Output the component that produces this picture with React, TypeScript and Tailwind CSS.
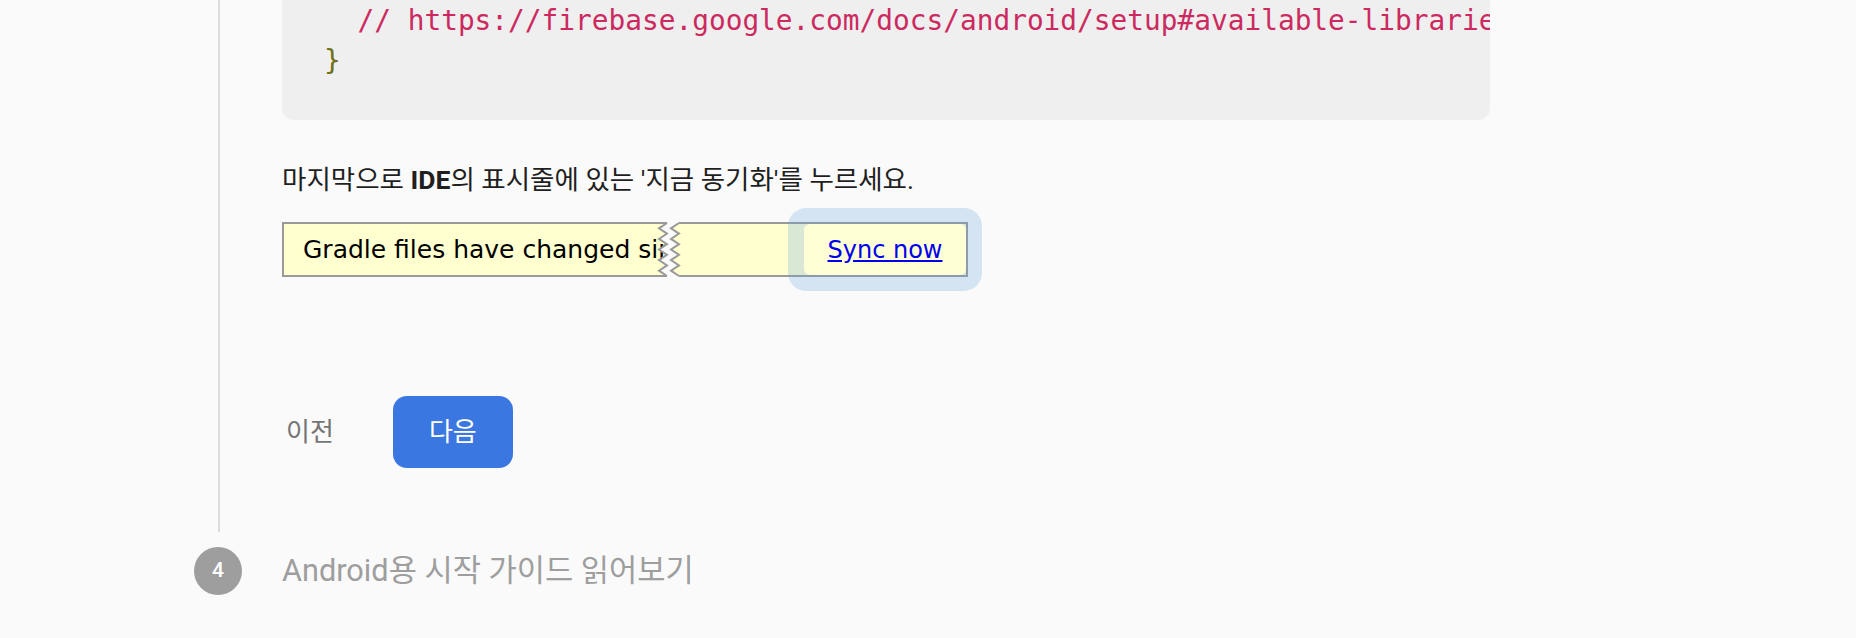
import React from "react";

const ys = [1, 6.3, 11.6, 16.9, 22.2, 27.5, 32.8, 38.1, 43.4, 48.7, 54];
const leftPts = ys.map((y, i) => [i % 2 === 0 ? 15 : 7, y] as [number, number]);
const rightPts = leftPts.map(([x, y]) => [x + 12, y] as [number, number]);
const toStr = (p: [number, number][]) => p.map(([x, y]) => `${x},${y}`).join(" ");
const gapPoly: [number, number][] = [
  [15, -1],
  ...leftPts,
  [15, 56],
  [27, 56],
  ...[...rightPts].reverse(),
  [27, -1],
];

function Zigzag() {
  return (
    <svg
      className="absolute left-[370px] top-0"
      width="34"
      height="55"
      viewBox="0 0 34 55"
      overflow="visible"
    >
      <polygon points={toStr(gapPoly)} fill="#fafafa" />
      <polyline points={toStr(leftPts)} fill="none" stroke="#9a9a9a" strokeWidth="2" />
      <polyline points={toStr(rightPts)} fill="none" stroke="#9a9a9a" strokeWidth="2" />
    </svg>
  );
}

export default function App() {
  return (
    <div className="w-[1856px] h-[638px] overflow-hidden bg-[#fafafa] font-['Roboto','Noto_Sans_CJK_KR',sans-serif]">
      <div className="pl-[194px]">
        <div className="flex">
          <div className="w-[48px] shrink-0 flex pl-[24px]">
            <div className="w-[2px] bg-[#dcdcdc]" />
          </div>
          <div className="ml-[40px] flex flex-col pb-[64px]">
            <div className="w-[1208px] overflow-hidden rounded-b-[12px] bg-[#efefef] pl-[42px] pt-[1px] pb-[39px] font-['DejaVu_Sans_Mono',monospace] text-[27.8px] leading-[40px] whitespace-pre">
              <div className="text-[#cc2a5f]">{"  // https://firebase.google.com/docs/android/setup#available-libraries"}</div>
              <div className="text-[#6f7118]">{"}"}</div>
            </div>

            <p className="mt-[42px] text-[26.5px] leading-[36px] text-[#1f1f1f]">
              마지막으로 <b className="font-bold">IDE</b>의 표시줄에 있는 '지금 동기화'를 누르세요.
            </p>

            <div className="relative mt-[24px] flex h-[55px] w-[686px]">
              <div className="w-[385px] h-full overflow-hidden whitespace-nowrap border-y-2 border-l-2 border-[#9a9a9a] bg-[#ffffd0] pl-[19px] flex items-center font-['DejaVu_Sans',sans-serif] text-[25px] text-black">
                Gradle files have changed since last project sync.
              </div>
              <div className="flex-1 h-full border-y-2 border-r-2 border-[#9a9a9a] bg-[#ffffd0] flex justify-end">
                <div className="h-full w-[162px] rounded-[6px] bg-[#ffffd6] shadow-[0_0_0_16px_rgba(100,165,225,0.25)] flex items-center justify-center">
                  <span className="font-['DejaVu_Sans',sans-serif] text-[24px] text-[#0000ee] underline">
                    Sync now
                  </span>
                </div>
              </div>
              <Zigzag />
            </div>

            <div className="mt-[119px] flex items-center">
              <button className="ml-[4px] text-[26px] text-[#757575] leading-none">이전</button>
              <button className="ml-[59px] w-[120px] h-[72px] rounded-[14px] bg-[#3b77e0] text-white text-[26px] flex items-center justify-center">
                다음
              </button>
            </div>
          </div>
        </div>

        <div className="mt-[15px] flex items-center">
          <div className="w-[48px] h-[48px] rounded-full bg-[#9e9e9e] text-white text-[21px] font-medium flex items-center justify-center">
            4
          </div>
          <div className="ml-[40px] text-[30.7px] text-[#9e9e9e]">Android용 시작 가이드 읽어보기</div>
        </div>
      </div>
    </div>
  );
}
